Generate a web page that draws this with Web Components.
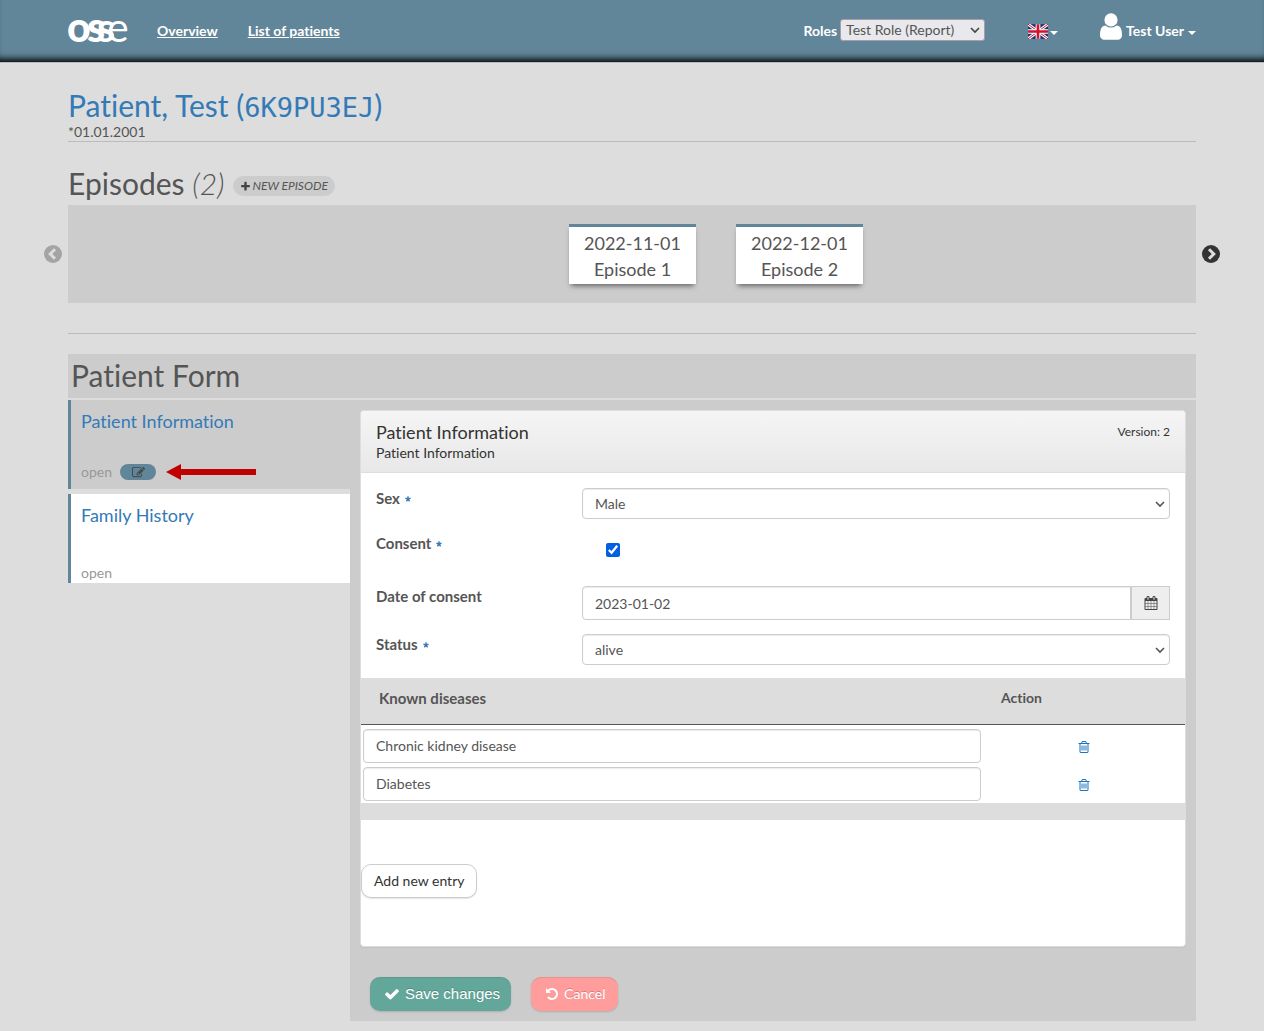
<!DOCTYPE html>
<html lang="en">
<head>
<meta charset="utf-8">
<meta name="viewport" content="width=device-width, initial-scale=1">
<title>OSSE – Patient Form</title>
<style>
  body {
    margin: 0;
    background: #ddd;
    color: #555;
    font: 14px/20px Lato, "Open Sans", sans-serif;
    font-variant-ligatures: none;
    --accent: #628699;
    --link: #337ab7;
    --shade: #ccc;
    --gutter: 68px;
  }
</style>
</head>
<body>
<osse-app></osse-app>

<script>
const ICONS = {
  user: ['0 0 1280 1792', '<path d="M1280 1399q0 109-62.5 187t-150.5 78h-854q-88 0-150.5-78t-62.5-187q0-85 8.500-160.500t31.500-152 58.500-131 94-89 134.500-34.500q131 128 313 128t313-128q76 0 134.500 34.500t94 89 58.500 131 31.500 152 8.500 160.500zm-256-887q0 159-112.500 271.500t-271.500 112.500-271.500-112.500-112.500-271.500 112.500-271.500 271.500-112.500 271.500 112.500 112.500 271.500z"/>'],
  trash: ['0 0 1792 1792', '<path d="M704 736v576q0 14-9 23t-23 9h-64q-14 0-23-9t-9-23v-576q0-14 9-23t23-9h64q14 0 23 9t9 23zm256 0v576q0 14-9 23t-23 9h-64q-14 0-23-9t-9-23v-576q0-14 9-23t23-9h64q14 0 23 9t9 23zm256 0v576q0 14-9 23t-23 9h-64q-14 0-23-9t-9-23v-576q0-14 9-23t23-9h64q14 0 23 9t9 23zm128 724v-948h-896v948q0 22 7 40.5t14.5 27 10.5 8.5h832q3 0 10.5-8.5t14.5-27 7-40.5zm-672-1076h448l-48-117q-7-9-17-11h-317q-10 2-17 11zm928 32v64q0 14-9 23t-23 9h-96v948q0 83-47 143.5t-113 60.5h-832q-66 0-113-58.5t-47-141.5v-952h-96q-14 0-23-9t-9-23v-64q0-14 9-23t23-9h309l70-167q15-37 54-63t79-26h320q40 0 79 26t54 63l70 167h309q14 0 23 9t9 23z"/>'],
  calendar: ['0 0 1792 1792', '<path d="M192 1664h288v-288h-288v288zm352 0h320v-288h-320v288zm-352-352h288v-320h-288v320zm352 0h320v-320h-320v320zm-352-384h288v-288h-288v288zm736 736h320v-288h-320v288zm-384-736h320v-288h-320v288zm768 736h288v-288h-288v288zm-384-352h320v-320h-320v320zm-352-864v-288q0-13-9.5-22.5t-22.5-9.5h-64q-13 0-22.5 9.5t-9.5 22.5v288q0 13 9.5 22.5t22.5 9.5h64q13 0 22.5-9.5t9.5-22.5zm736 864h288v-320h-288v320zm-384-384h320v-288h-320v288zm384 0h288v-288h-288v288zm32-480v-288q0-13-9.5-22.5t-22.5-9.5h-64q-13 0-22.5 9.5t-9.5 22.5v288q0 13 9.5 22.5t22.5 9.5h64q13 0 22.5-9.5t9.5-22.5zm384-64v1280q0 52-38 90t-90 38h-1408q-52 0-90-38t-38-90v-1280q0-52 38-90t90-38h128v-96q0-66 47-113t113-47h64q66 0 113 47t47 113v96h384v-96q0-66 47-113t113-47h64q66 0 113 47t47 113v96h128q52 0 90 38t38 90z"/>'],
  check: ['0 0 1792 1792', '<path d="M1671 566q0 40-28 68l-724 724-136 136q-28 28-68 28t-68-28l-136-136-362-362q-28-28-28-68t28-68l136-136q28-28 68-28t68 28l294 295 656-657q28-28 68-28t68 28l136 136q28 28 28 68z"/>'],
  undo: ['0 0 1792 1792', '<path d="M1664 896q0 156-61 298t-164 245-245 164-298 61q-172 0-327-72.5t-264-204.5q-7-10-6.5-22.5t8.5-20.5l137-138q10-9 25-9 16 2 23 12 73 95 179 147t225 52q104 0 198.5-40.5t163.5-109.5 109.5-163.5 40.5-198.5-40.5-198.5-109.5-163.5-163.5-109.5-198.5-40.5q-98 0-188 35.5t-160 101.5l137 138q31 30 14 69-17 40-59 40h-448q-26 0-45-19t-19-45v-448q0-42 40-59 39-17 69 14l130 129q107-101 244.5-156.5t284.5-55.5q156 0 298 61t245 164 164 245 61 298z"/>'],
  plus: ['0 0 1792 1792', '<path d="M1600 736v192q0 40-28 68t-68 28h-416v416q0 40-28 68t-68 28h-192q-40 0-68-28t-28-68v-416h-416q-40 0-68-28t-28-68v-192q0-40 28-68t68-28h416v-416q0-40 28-68t68-28h192q40 0 68 28t28 68v416h416q40 0 68 28t28 68z"/>'],
  edit: ['0 0 1792 1792', '<path d="M888 1184l116-116-152-152-116 116v56h96v96h56zm440-720q-16-16-33 1l-350 350q-17 17-1 33t33-1l350-350q17-17 1-33zm80 594v190q0 119-84.5 203.5t-203.5 84.5h-832q-119 0-203.5-84.5t-84.5-203.5v-832q0-119 84.5-203.5t203.5-84.5h832q63 0 117 25 15 7 18 23 3 17-9 29l-49 49q-14 14-32 8-23-6-45-6h-832q-66 0-113 47t-47 113v832q0 66 47 113t113 47h832q66 0 113-47t47-113v-126q0-13 9-22l64-64q15-15 35-7t20 29zm-96-738l288 288-672 672h-288v-288zm444 132l-92 92-288-288 92-92q28-28 68-28t68 28l152 152q28 28 28 68t-28 68z"/>'],
  prev: ['0 0 18 18', '<circle cx="9" cy="9" r="9"/><path d="M11 4.200 6.200 9l4.800 4.800" fill="none" stroke="#ddd" stroke-width="3"/>'],
  next: ['0 0 18 18', '<circle cx="9" cy="9" r="9"/><path d="M7 4.200 11.800 9 7 13.800" fill="none" stroke="#ddd" stroke-width="3"/>'],
  caret: ['0 0 8 4', '<path d="M0 0h8L4 4z"/>'],
  chevron: ['0 0 10 10', '<path d="M1 3 5 7 9 3" fill="none" stroke="currentColor" stroke-width="1.600"/>'],
  required: ['0 0 10 10', '<path d="M5 5V.5M5 5 .7 3.600M5 5l4.300-1.400M5 5 2.300 8.700M5 5l2.700 3.700" stroke="currentColor" stroke-width="2.300"/>'],
  flag: ['0 0 60 44', '<path fill="#1f3278" d="M0 0h60v44H0z"/><path d="m0 0 60 44M60 0 0 44" stroke="#fff" stroke-width="9"/><path d="m0 0 60 44M60 0 0 44" stroke="#d0142c" stroke-width="3"/><path d="M30 0v44M0 22h60" stroke="#fff" stroke-width="14"/><path d="M30 0v44M0 22h60" stroke="#d0142c" stroke-width="8"/>'],
  arrow: ['0 0 90 16', '<path d="M0 8 15 0v5h75v6H15v5z"/>']
};

/* Base class: clones the element's markup into an open shadow root. */
class Base extends HTMLElement {
  connectedCallback() {
    if (this.shadowRoot) return;
    const t = document.createElement('template');
    t.innerHTML = `<style>*{box-sizing:border-box}${this.css()}</style>${this.html()}`;
    this.attachShadow({ mode: 'open' }).append(t.content.cloneNode(true));
  }
  attr(name) { return this.getAttribute(name) || ''; }
}

customElements.define('osse-icon', class extends Base {
  css() { return `:host{display:inline-flex;flex:none;width:14px;height:14px}svg{display:block;width:100%;height:100%;fill:currentColor}`; }
  html() {
    const [box, shape] = ICONS[this.attr('name')];
    return `<svg viewBox="${box}" aria-hidden="true">${shape}</svg>`;
  }
});

customElements.define('osse-logo', class extends Base {
  css() { return `:host{display:block;width:60px;height:24px}
    svg{display:block;overflow:visible}
    text{font-family:Lato,sans-serif;font-size:41px;fill:#fff}
    .b{font-weight:900}.s{font-weight:700}.l{font-weight:400}`; }
  html() { return `<svg width="60" height="24" role="img" aria-label="osse"><text x="-1 19 29 39" y="23"><tspan class="b">o</tspan><tspan class="b">s</tspan><tspan class="s">s</tspan><tspan class="l">e</tspan></text></svg>`; }
});

customElements.define('osse-header', class extends Base {
  css() { return `
    :host{display:block;background:var(--accent);box-shadow:inset 0 -8px 7px -5px #000,0 1px 0 #bbb;color:#fff;font-weight:700}
    header{display:flex;align-items:center;height:62px;padding:0 var(--gutter)}
    nav{display:flex;gap:30px;margin-left:29px}
    a{color:#fff}
    .tools{display:flex;align-items:center;margin-left:auto}
    .role{display:flex;align-items:center;gap:3px}
    .pick{display:grid;align-items:center;padding-bottom:2px}
    .pick>*{grid-area:1/1}
    .pick osse-icon{justify-self:end;margin-right:5px;width:10px;height:10px;color:#444;pointer-events:none}
    select{appearance:none;width:145px;height:22px;padding:0 20px 0 5px;border:1px solid #a99cab;border-radius:3px;background:#e9e9ed;color:#555;font:14px/20px Lato,sans-serif}
    button{display:flex;align-items:center;padding:0;border:0;background:none;color:inherit;font:inherit}
    .lang{gap:2px;margin-left:43px}
    .flag{width:20px;height:15px}
    .caret{width:8px;height:4px;margin-top:4px}
    .user{margin-left:42px;gap:4px}
    .person{width:22px;height:31px;margin-bottom:9px}`; }
  html() { return `<header>
    <osse-logo></osse-logo>
    <nav><a href="#overview">Overview</a><a href="#patients">List of patients</a></nav>
    <div class="tools">
      <div class="role"><label for="role">Roles</label>
        <span class="pick"><select id="role"><option>Test Role (Report)</option></select><osse-icon name="chevron"></osse-icon></span></div>
      <button class="lang" aria-label="Language"><osse-icon class="flag" name="flag"></osse-icon><osse-icon class="caret" name="caret"></osse-icon></button>
      <button class="user"><osse-icon class="person" name="user"></osse-icon><span>Test User</span><osse-icon class="caret" name="caret"></osse-icon></button>
    </div></header>`; }
});

customElements.define('patient-title', class extends Base {
  css() { return `
    :host{display:block;margin:0 var(--gutter);padding-top:26px;border-bottom:1px solid #bbb}
    h1{margin:0;font-size:30px;line-height:34px;font-weight:400;color:var(--link)}
    code{font-family:Consolas,"DejaVu Sans Mono",monospace;font-size:27px;line-height:1}
    p{margin:0;line-height:19px}`; }
  html() { return `<h1>${this.attr('name')} (<code>${this.attr('code')}</code>)</h1><p><slot></slot></p>`; }
});

customElements.define('episode-card', class extends Base {
  css() { return `
    :host{display:block;width:127px;height:60px;padding-top:3px;border-top:3px solid var(--accent);background:#fff;box-shadow:0 4px 5px -2px #666;text-align:center;font-size:18px;line-height:26px}
    time,span{display:block}`; }
  html() { return `<time>${this.attr('date')}</time><span><slot></slot></span>`; }
});

customElements.define('episode-strip', class extends Base {
  css() { return `
    :host{display:block;padding-top:25px}
    .head{display:flex;align-items:center;gap:8px;margin:0 var(--gutter);height:38px;padding-bottom:6px}
    h2{margin:0;font-size:30px;line-height:34px;font-weight:400}
    em{font-weight:300}
    .new{display:flex;align-items:center;gap:2px;height:20px;margin-top:6px;padding:0 7px;border:0;border-radius:10px;background:var(--shade);color:#555;font:italic 12px/20px Lato,sans-serif}
    .new osse-icon{width:11px;height:11px;color:#444}
    .row{display:grid;grid-template-columns:var(--gutter) 1fr var(--gutter);align-items:center}
    .nav{display:flex;padding:0;border:0;background:none;margin:0 6px;color:#333}
    .nav osse-icon{width:18px;height:18px}
    .prev{justify-self:end;color:#a4a4a4}
    .track{display:flex;justify-content:center;gap:40px;height:98px;padding:19px 0 0 168px;background:var(--shade)}
    hr{height:1px;margin:30px var(--gutter) 20px;border:0;background:#bbb}`; }
  html() { return `
    <div class="head"><h2>Episodes <em>(${this.attr('count')})</em></h2>
      <button class="new"><osse-icon name="plus"></osse-icon>NEW EPISODE</button></div>
    <div class="row">
      <button class="nav prev" aria-label="Previous"><osse-icon name="prev"></osse-icon></button>
      <div class="track"><slot></slot></div>
      <button class="nav" aria-label="Next"><osse-icon name="next"></osse-icon></button>
    </div><hr>`; }
});

customElements.define('form-link', class extends Base {
  css() { return `
    :host{display:flex;flex-direction:column;justify-content:space-between;height:89px;padding:10px 10px 0;border-left:3px solid var(--accent);background:#fff;color:#999}
    :host([active]){background:var(--shade)}
    a{color:var(--link);font-size:18px;line-height:22px;text-decoration:none}
    div{display:flex;align-items:center;gap:8px}
    :host([active]) div{padding-bottom:7px}`; }
  html() { return `<a href="#form">${this.attr('label')}</a><div><span>open</span><slot></slot></div>`; }
});

customElements.define('edit-pill', class extends Base {
  css() { return `:host{display:flex;align-items:center;gap:10px;color:#c00000}
    button{display:flex;align-items:center;justify-content:center;width:36px;height:16px;padding:0;border:0;border-radius:8px;background:var(--accent);color:#444}
    button osse-icon{width:13px;height:13px}
    .arrow{width:90px;height:16px}`; }
  html() { return `<button aria-label="Edit"><osse-icon name="edit"></osse-icon></button><osse-icon class="arrow" name="arrow"></osse-icon>`; }
});

customElements.define('form-field', class extends Base {
  css() { return `
    :host{display:grid;grid-template-columns:1fr 3fr;align-items:start}
    label{padding:0 15px;font-weight:700;font-size:15px;line-height:20px}
    label osse-icon{width:6px;height:6px;margin-left:5px;color:var(--link);vertical-align:2px}
    .control{display:grid;align-items:center;margin:0 15px}
    .control.group{grid-template-columns:1fr 39px}
    input,select{width:100%;min-width:0;padding:0 12px;border:1px solid #ccc;border-radius:4px;background:#fff;color:#555;font:14px/20px Lato,sans-serif;box-shadow:inset 0 1px 1px rgba(0,0,0,.08)}
    select{appearance:none;height:31px;grid-area:1/1}
    .chev{grid-area:1/1;justify-self:end;width:10px;height:10px;margin-right:5px;pointer-events:none}
    input{height:34px}
    .group input{border-radius:4px 0 0 4px}
    .group button{display:flex;align-items:center;justify-content:center;height:34px;padding:0;border:1px solid #ccc;background:#eee;color:#444}
    input[type=checkbox]{width:14px;height:14px;margin:10px 0 0 24px;padding:0;box-shadow:none;accent-color:#0060df}`; }
  html() {
    const value = this.attr('value');
    const control = {
      select: `<div class="control"><select id="f"><option>${value}</option></select><osse-icon class="chev" name="chevron"></osse-icon></div>`,
      check: `<div class="control"><input id="f" type="checkbox" checked></div>`,
      date: `<div class="control group"><input id="f" type="text" value="${value}"><button aria-label="Pick a date"><osse-icon name="calendar"></osse-icon></button></div>`
    }[this.attr('type')];
    return `<label for="f">${this.attr('label')}${this.hasAttribute('required') ? '<osse-icon name="required"></osse-icon>' : ''}</label>${control}`;
  }
});

customElements.define('entry-table', class extends Base {
  css() { return `
    :host{display:block}
    table{width:100%;border-collapse:collapse;table-layout:fixed}
    .act{width:202px}
    thead,tfoot{background:#ddd}
    th{height:46px;padding:0 18px 6px;border-bottom:1px solid #555;text-align:left}
    th:first-child{font-size:15px}
    td{padding:2px;text-align:center}
    tbody tr:first-child td{padding-top:4px}
    tfoot td{height:17px;padding:0}
    input{display:block;width:100%;height:34px;padding:0 12px;border:1px solid #ccc;border-radius:4px;background:#fff;color:#555;font:14px/20px Lato,sans-serif;box-shadow:inset 0 1px 1px rgba(0,0,0,.08)}
    button{padding:0;border:0;background:none;color:#1c75bc}
    td osse-icon{vertical-align:middle}`; }
  html() {
    const rows = this.attr('entries').split('|').map(v =>
      `<tr><td><input type="text" aria-label="Known disease" value="${v}"></td><td><button aria-label="Delete"><osse-icon name="trash"></osse-icon></button></td></tr>`).join('');
    return `<table><colgroup><col><col class="act"></colgroup>
      <thead><tr><th>${this.attr('label')}</th><th>Action</th></tr></thead>
      <tbody>${rows}</tbody><tfoot><tr><td colspan="2"></td></tr></tfoot></table>`;
  }
});

customElements.define('form-panel', class extends Base {
  css() { return `
    :host{display:block;border:1px solid #ddd;border-radius:4px;background:#fff;overflow:hidden;box-shadow:0 1px 1px rgba(0,0,0,.05)}
    header{display:flex;justify-content:space-between;height:62px;padding:10px 15px 0;border-bottom:1px solid #ddd;background:linear-gradient(#f5f5f5,#e8e8e8);color:#333}
    h3{margin:0;font-size:18px;line-height:22px;font-weight:400}
    p{margin:0;line-height:20px}
    small{font-size:12px;line-height:22px}`; }
  html() { return `<header><div><h3>${this.attr('label')}</h3><p>${this.attr('label')}</p></div><small>Version: ${this.attr('version')}</small></header><slot></slot>`; }
});

customElements.define('osse-button', class extends Base {
  css() { return `
    :host{display:inline-flex}
    button{display:flex;align-items:center;height:34px;padding:0 12px;border:1px solid #ccc;border-radius:10px;background:#fff;color:#333;font:14px/20px Lato,sans-serif;font-variant-ligatures:none;box-shadow:0 1px 1px rgba(0,0,0,.1)}
    :host([kind]) button{gap:5px;border:0;color:#fff;text-shadow:0 -1px 0 rgba(0,0,0,.2);box-shadow:inset 0 1px 0 rgba(0,0,0,.08),0 1px 2px rgba(0,0,0,.15)}
    :host([kind=save]) button{padding:0 11px 0 14px;background:#63a69a;font:15px/20px "Liberation Sans",Arial,sans-serif}
    :host([kind=cancel]) button{padding:0 13px 0 14px;background:#ff9c9c}`; }
  html() { return `<button><slot name="icon"></slot><slot></slot></button>`; }
});

customElements.define('osse-app', class extends Base {
  css() { return `
    :host{display:block}
    .form{margin:0 var(--gutter) 10px}
    h2{margin:0 0 2px;padding:0 3px 2px;background:var(--shade);font-size:30px;line-height:42px;font-weight:400}
    .cols{display:grid;grid-template-columns:1fr 3fr;align-items:start}
    nav{display:grid;gap:5px}
    .detail{padding:10px;background:var(--shade)}
    .fields{display:grid;gap:14px;padding:15px 0 13px}
    .fields .consent{margin-bottom:15px}
    .add{padding:44px 0 48px}
    .actions{display:flex;gap:20px;padding:30px 10px 0}
    .save{width:16px;height:16px}`; }
  html() { return `
    <osse-header></osse-header>
    <main>
      <patient-title name="Patient, Test" code="6K9PU3EJ">*01.01.2001</patient-title>
      <episode-strip count="2">
        <episode-card date="2022-11-01">Episode 1</episode-card>
        <episode-card date="2022-12-01">Episode 2</episode-card>
      </episode-strip>
      <section class="form">
        <h2>Patient Form</h2>
        <div class="cols">
          <nav>
            <form-link active label="Patient Information"><edit-pill></edit-pill></form-link>
            <form-link label="Family History"></form-link>
          </nav>
          <div class="detail">
            <form-panel label="Patient Information" version="2">
              <div class="fields">
                <form-field type="select" label="Sex" value="Male" required></form-field>
                <form-field class="consent" type="check" label="Consent" required></form-field>
                <form-field type="date" label="Date of consent" value="2023-01-02"></form-field>
                <form-field type="select" label="Status" value="alive" required></form-field>
              </div>
              <entry-table label="Known diseases" entries="Chronic kidney disease|Diabetes"></entry-table>
              <div class="add"><osse-button>Add new entry</osse-button></div>
            </form-panel>
            <div class="actions">
              <osse-button kind="save"><osse-icon class="save" slot="icon" name="check"></osse-icon>Save changes</osse-button>
              <osse-button kind="cancel"><osse-icon slot="icon" name="undo"></osse-icon>Cancel</osse-button>
            </div>
          </div>
        </div>
      </section>
    </main>`; }
});
</script>
</body>
</html>
